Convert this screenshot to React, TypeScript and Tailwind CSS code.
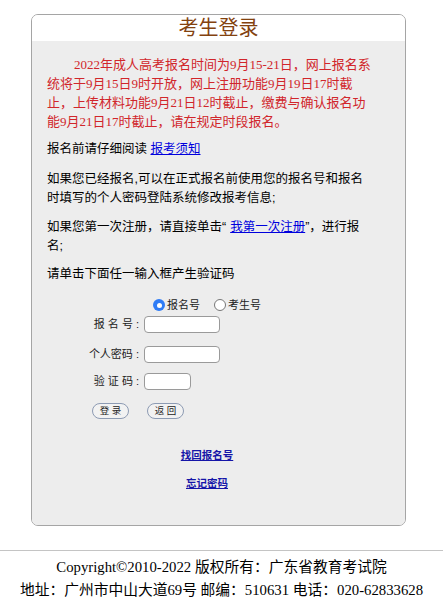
const sans = "font-['Liberation_Sans','Noto_Sans_CJK_SC',sans-serif]";

function Row({ label, inputW, className }: { label: string; inputW: string; className: string }) {
  return (
    <div className={`flex items-center ${className}`}>
      <div className="w-[92px] text-right text-[11px] leading-[17px] whitespace-pre text-[#222]">{label}</div>
      <input
        type="text"
        className={`ml-[5px] h-[17px] ${inputW} rounded-[4px] border border-[#9a9a9a] bg-white`}
      />
    </div>
  );
}

export default function App() {
  return (
    <div className={`min-h-[606px] bg-white ${sans} text-black`}>
      <div className="pt-[14px]">
        <div className="ml-[31px] w-[375px] rounded-[7px] border border-[#a5a5a5] overflow-hidden">
          <div className="h-[26px] bg-white flex items-center justify-center">
            <span className="text-[20px] leading-[26px] text-[#83420f]">考生登录</span>
          </div>
          <div className="bg-[#ededed] pl-[15px] pb-[35px]">
            <div className="w-[320px]">
              <p className="w-[326px] pt-[14px] indent-[27px] text-[13px] leading-[19px] text-[#d1262b] font-['Liberation_Serif','Noto_Sans_CJK_SC',serif]">
                2022年成人高考报名时间为9月15-21日，网上报名系统将于9月15日9时开放，网上注册功能9月19日17时截止，上传材料功能9月21日12时截止，缴费与确认报名功能9月21日17时截止，请在规定时段报名。
              </p>
              <p className="mt-[9px] text-[12.5px] leading-[19px]">
                报名前请仔细阅读 <a href="#" className="text-[#0000dd] underline">报考须知</a>
              </p>
              <p className="mt-[11px] text-[12.5px] leading-[19px]">
                如果您已经报名,可以在正式报名前使用您的报名号和报名时填写的个人密码登陆系统修改报考信息;
              </p>
              <p className="mt-[10px] text-[12.5px] leading-[19px]">
                如果您第一次注册，请直接单击“<a href="#" className="ml-[4px] text-[#0000dd] underline">我第一次注册</a>”，进行报名;
              </p>
              <p className="mt-[9px] text-[12.5px] leading-[19px]">请单击下面任一输入框产生验证码</p>

              <div className="mt-[13px] h-[16px] flex items-center justify-center text-[11px] text-[#222]">
                <label className="flex items-center">
                  <span className="w-[12px] h-[12px] rounded-full bg-[#2f7cf6] flex items-center justify-center">
                    <span className="w-[5px] h-[5px] rounded-full bg-white" />
                  </span>
                  <span className="ml-[2px]">报名号</span>
                </label>
                <label className="flex items-center ml-[14px]">
                  <span className="w-[12px] h-[12px] rounded-full border border-[#777] bg-white" />
                  <span className="ml-[2px]">考生号</span>
                </label>
              </div>

              <Row label="报 名 号 :" inputW="w-[76px]" className="mt-[3px]" />
              <Row label="个人密码 :" inputW="w-[76px]" className="mt-[13px]" />
              <Row label="验 证 码 :" inputW="w-[47px]" className="mt-[10px]" />

              <div className="mt-[13px] flex pl-[45px]">
                <button className="w-[37px] h-[16px] rounded-full border border-[#8d9bb3] bg-[#f2f2f2] text-[9.5px] leading-[14px] text-[#222]">登 录</button>
                <button className="ml-[18px] w-[37px] h-[16px] rounded-full border border-[#8d9bb3] bg-[#f2f2f2] text-[9.5px] leading-[14px] text-[#222]">返 回</button>
              </div>

              <div className="mt-[29px] flex flex-col items-center text-[10.5px] leading-[14px]">
                <a href="#" className="text-[#1515a8] underline font-bold">找回报名号</a>
                <a href="#" className="mt-[14px] text-[#1515a8] underline font-bold">忘记密码</a>
              </div>
            </div>
          </div>
        </div>
      </div>

      <div className="mt-[24px] border-t border-[#c4c4c4] pt-[5px] text-center text-[14.75px] leading-[23px] font-['Liberation_Serif','Noto_Sans_CJK_SC',serif]">
        <div>Copyright©2010-2022 版权所有：广东省教育考试院</div>
        <div>地址：广州市中山大道69号 邮编：510631 电话：020-62833628</div>
      </div>
    </div>
  );
}
